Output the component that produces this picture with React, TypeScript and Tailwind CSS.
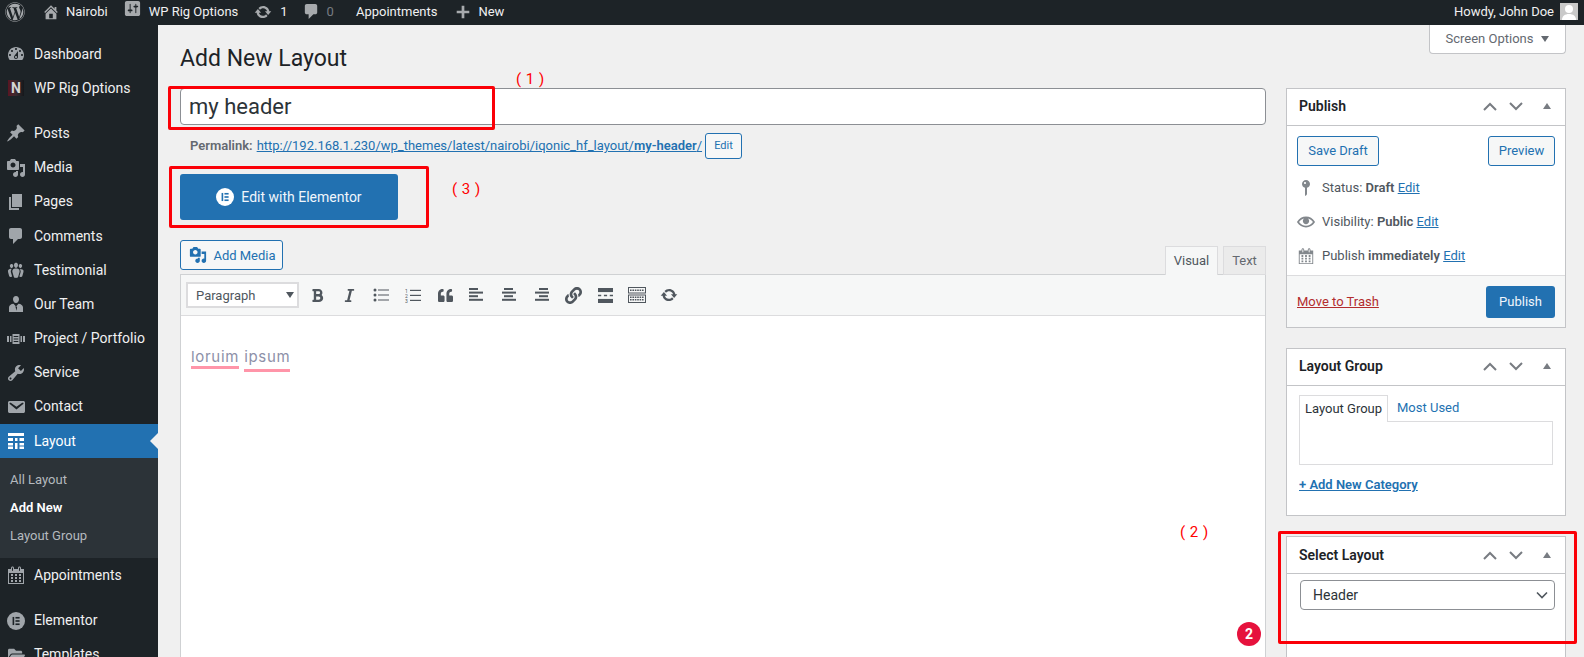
import React from "react";
import { FaWordpress, FaBold, FaItalic, FaQuoteLeft, FaLink, FaFolderOpen } from "react-icons/fa";

const P = {
  gauge: "M3.76 16h12.48c1.1-1.37 1.76-3.11 1.76-5 0-4.42-3.58-8-8-8s-8 3.58-8 8c0 1.89.66 3.63 1.76 5zM10 4c.55 0 1 .45 1 1s-.45 1-1 1-1-.45-1-1 .45-1 1-1zM6 6c.55 0 1 .45 1 1s-.45 1-1 1-1-.45-1-1 .45-1 1-1zm8 0c.55 0 1 .45 1 1s-.45 1-1 1-1-.45-1-1 .45-1 1-1zm-5.37 5.55L12 7v6c0 1.1-.9 2-2 2s-2-.9-2-2c0-.57.24-1.08.63-1.45zM4 10c.55 0 1 .45 1 1s-.45 1-1 1-1-.45-1-1 .45-1 1-1zm12 0c.55 0 1 .45 1 1s-.45 1-1 1-1-.45-1-1 .45-1 1-1zm-5 3c0-.55-.45-1-1-1s-1 .45-1 1 .45 1 1 1 1-.45 1-1z",
  pin: "M10.44 3.02l1.82-1.82 6.36 6.35-1.83 1.82c-1.05-.68-2.48-.57-3.41.36l-.75.75c-.92.93-1.04 2.35-.35 3.41l-1.83 1.82-2.41-2.41-2.8 2.79c-.42.42-3.38 2.71-3.8 2.29s1.86-3.39 2.28-3.81l2.79-2.79L4.1 9.36l1.83-1.82c1.05.69 2.48.57 3.4-.36l.75-.75c.93-.92 1.05-2.35.36-3.41z",
  media: "M13 11V4c0-.55-.45-1-1-1h-1.67L9 1H5L3.67 3H2c-.55 0-1 .45-1 1v7c0 .55.45 1 1 1h10c.55 0 1-.45 1-1zM7 4.5c1.38 0 2.5 1.12 2.5 2.5S8.38 9.5 7 9.5 4.5 8.38 4.5 7 5.62 4.5 7 4.5zM14 6h5v10.5c0 1.38-1.12 2.5-2.5 2.5S14 17.88 14 16.5s1.12-2.5 2.5-2.5c.17 0 .34.02.5.05V9h-3V6zm-4 8.05V13h2v3.5c0 1.38-1.12 2.5-2.5 2.5S7 17.88 7 16.5 8.12 14 9.5 14c.17 0 .34.02.5.05z",
  page: "M6 15V2h10v13H6zm-1 1h8v2H3V5h2v11z",
  comment: "M5 2h9c1.1 0 2 .9 2 2v7c0 1.1-.9 2-2 2h-2l-5 5v-5H5c-1.1 0-2-.9-2-2V4c0-1.1.9-2 2-2z",
  groups: "M8.03 4.46c-.29 1.28.55 3.46 1.97 3.46 1.41 0 2.25-2.18 1.96-3.46-.22-.98-1.08-1.63-1.96-1.63-.89 0-1.74.65-1.97 1.63zm-4.13.9c-.25 1.08.47 2.93 1.67 2.93s1.92-1.85 1.67-2.93c-.19-.83-.92-1.39-1.67-1.39s-1.48.56-1.67 1.39zm8.86 0c-.25 1.08.47 2.93 1.66 2.93 1.2 0 1.92-1.85 1.67-2.93-.19-.83-.92-1.39-1.67-1.39-.74 0-1.47.56-1.66 1.39zm-.59 11.43l1.25-4.3C14.2 10 12.71 8.47 10 8.47c-2.72 0-4.21 1.53-3.44 4.02l1.26 4.3C8.05 17.51 9 18 10 18c.98 0 1.94-.49 2.17-1.21zM5.5 9.2c-.6.8-1 2-.45 3.6l1.1 3.8c-.35.2-.75.3-1.15.3-.85 0-1.65-.4-1.85-1l-1.05-3.7C1.45 10.1 2.7 8.8 5 8.8zm9 0c2.3-.4 3.55.9 2.9 3l-1.05 3.7c-.2.6-1 1-1.85 1-.4 0-.8-.1-1.15-.3l1.1-3.8c.55-1.6.15-2.8-.95-3.6z",
  tools: "M16.68 9.77c-1.34 1.34-3.3 1.67-4.95.99l-5.41 6.52c-.99.99-2.59.99-3.58 0s-.99-2.59 0-3.57l6.52-5.42c-.68-1.65-.35-3.61.99-4.95 1.28-1.28 3.12-1.62 4.72-1.06l-2.89 2.89 2.82 2.82 2.86-2.87c.53 1.58.18 3.39-1.08 4.67zM3.81 16.21c.4.39 1.04.39 1.43 0 .4-.4.4-1.04 0-1.43-.39-.4-1.03-.4-1.43 0-.39.39-.39 1.03 0 1.43z",
  email: "M3.87 4h13.25C18.37 4 19 4.59 19 5.79v8.42c0 1.19-.63 1.79-1.88 1.79H3.87c-1.25 0-1.88-.6-1.88-1.79V5.79c0-1.2.63-1.79 1.88-1.79zm6.62 8.6l6.74-5.53c.24-.2.43-.66.13-1.07-.29-.41-.82-.42-1.17-.17l-5.7 3.86L4.8 5.83c-.35-.25-.88-.24-1.17.17-.3.41-.11.87.13 1.07z",
  calendar: "M15 4h3v15H2V4h3V3c0-.41.15-.76.44-1.06.29-.29.65-.44 1.06-.44s.77.15 1.06.44c.29.3.44.65.44 1.06v1h4V3c0-.41.15-.76.44-1.06.29-.29.65-.44 1.06-.44s.77.15 1.06.44c.29.3.44.65.44 1.06v1zM6 3v2.5c0 .14.05.26.15.36.09.09.21.14.35.14s.26-.05.35-.14c.1-.1.15-.22.15-.36V3c0-.14-.05-.26-.15-.35-.09-.1-.21-.15-.35-.15s-.26.05-.35.15c-.1.09-.15.21-.15.35zm7 0v2.5c0 .14.05.26.14.36.1.09.22.14.36.14s.26-.05.36-.14c.09-.1.14-.22.14-.36V3c0-.14-.05-.26-.14-.35-.1-.1-.22-.15-.36-.15s-.26.05-.36.15c-.09.09-.14.21-.14.35zm4 15V8H3v10h14zM7 9v2H5V9h2zm2 0h2v2H9V9zm4 2V9h2v2h-2zm-6 1v2H5v-2h2zm2 0h2v2H9v-2zm4 2v-2h2v2h-2zm-6 1v2H5v-2h2zm4 2H9v-2h2v2zm4 0h-2v-2h2v2z",
  home: "M16 8.5l1.53 1.53-1.06 1.06L10 4.62l-6.47 6.47-1.06-1.06L10 2.5l4 4v-2h2v4zm-6-2.46l6 5.99V18H4v-5.97zM12 17v-5H8v5h4z",
  update: "M10.2 3.28c3.53 0 6.43 2.61 6.92 6h2.08l-3.5 4-3.5-4h2.32c-.45-1.97-2.21-3.45-4.32-3.45-1.45 0-2.73.71-3.54 1.78L4.95 5.66C6.23 4.2 8.11 3.28 10.2 3.28zm-.4 13.44c-3.52 0-6.43-2.61-6.92-6H.8l3.5-4c1.17 1.33 2.33 2.67 3.5 4H5.48c.45 1.97 2.21 3.45 4.32 3.45 1.45 0 2.73-.71 3.54-1.78l1.71 1.95c-1.28 1.46-3.15 2.38-5.25 2.38z",
  plus: "M17 8.5v3h-5.5V17h-3v-5.5H3v-3h5.5V3h3v5.5H17z",
  settings: "M18 16V4c0-1.1-.9-2-2-2H4c-1.1 0-2 .9-2 2v12c0 1.1.9 2 2 2h12c1.1 0 2-.9 2-2zM8 11h1c.55 0 1 .45 1 1s-.45 1-1 1H8v1.5c0 .28-.22.5-.5.5s-.5-.22-.5-.5V13H6c-.55 0-1-.45-1-1s.45-1 1-1h1V5.5c0-.28.22-.5.5-.5s.5.22.5.5V11zm5-2h-1c-.55 0-1-.45-1-1s.45-1 1-1h1V5.5c0-.28.22-.5.5-.5s.5.22.5.5V7h1c.55 0 1 .45 1 1s-.45 1-1 1h-1v5.5c0 .28-.22.5-.5.5s-.5-.22-.5-.5V9z",
  status: "M14 6c0 1.86-1.28 3.41-3 3.86V16c0 1-2 2-2 2V9.86c-1.72-.45-3-2-3-3.86 0-2.21 1.79-4 4-4s4 1.79 4 4zM8 5c0 .55.45 1 1 1s1-.45 1-1-.45-1-1-1-1 .45-1 1z",
  eye: "M19.7 9.4C17.7 6 14 3.9 10 3.9S2.3 6 .3 9.4L0 10l.3.6c2 3.4 5.7 5.5 9.7 5.5s7.7-2.1 9.7-5.5l.3-.6-.3-.6zM10 14.1c-3.1 0-6-1.6-7.7-4.1C3.6 8 5.7 6.6 8 6.1c-.9.6-1.5 1.7-1.5 2.9 0 1.9 1.6 3.5 3.5 3.5s3.5-1.6 3.5-3.5c0-1.2-.6-2.3-1.5-2.9 2.3.5 4.4 1.9 5.7 3.9-1.7 2.5-4.6 4.1-7.7 4.1z",
  person: "M10 2c1.9 0 3 1.5 3 3.2S11.9 9 10 9 7 7 7 5.2 8.1 2 10 2zM3 18v-4.5C3 11.4 5 10 7.5 9.8L10 12.5l2.5-2.7C15 10 17 11.4 17 13.500V18zM9.3 12.500h1.400l.4 1-.7 3.200-.7-3.200z",
  project: "M1 7h2v6H1zM4 7h1.500v6H4zM17 7h2v6h-2zM14.500 7H16v6h-1.500zM6.500 5h7v10h-7zm1.200 2v1h4.600V7zm0 2.500v1h4.600v-1zm0 2.500v1h4.600v-1z",
  table: "M2 2h16v3H2zM2 7h5v3H2zM9 7h2.500v3H9zM13.500 7H18v3h-4.500zM2 12h5v2.500H2zM9 12h2.500v6H9zM13.500 12H18v2.500h-4.500zM2 15.500h5V18H2zM13.500 15.500H18V18h-4.500z",
};

const Ic = ({ d, size = 20, className = "" }: { d: string; size?: number; className?: string }) => (
  <svg viewBox="0 0 20 20" width={size} height={size} fill="currentColor" fillRule="evenodd" className={`shrink-0 ${className}`}>
    <path d={d} />
  </svg>
);

const ElementorIcon = ({ size, fg, bg }: { size: number; fg: string; bg: string }) => (
  <svg viewBox="0 0 20 20" width={size} height={size} className="shrink-0">
    <circle cx="10" cy="10" r="10" fill={fg} />
    <rect x="6.2" y="5.5" width="1.8" height="9" fill={bg} />
    <rect x="9.4" y="5.5" width="4.6" height="1.8" fill={bg} />
    <rect x="9.4" y="9.1" width="4.6" height="1.8" fill={bg} />
    <rect x="9.4" y="12.7" width="4.6" height="1.8" fill={bg} />
  </svg>
);

const MenuRow = ({ icon, label, sep }: { icon: React.ReactNode; label: string; sep?: boolean }) => (
  <div className={`flex h-[34.2px] shrink-0 items-center text-[14px] text-[#f0f0f1] ${sep ? "mb-[11px]" : ""}`}>
    <div className="flex w-[34px] justify-center pr-[2px] text-[#a0a5aa]">{icon}</div>
    <span>{label}</span>
  </div>
);

const Sidebar = () => (
  <aside className="flex w-[158px] shrink-0 flex-col overflow-hidden bg-[#1d2327] pt-[12px]">
    <MenuRow icon={<Ic d={P.gauge} />} label="Dashboard" />
    <MenuRow
      icon={
        <div className="flex h-[16px] w-[16px] items-center justify-center bg-gradient-to-r from-[#5a1422] via-[#3a2a30] to-[#15181b] text-[14px] font-bold leading-none text-[#d5d5d5]">
          N
        </div>
      }
      label="WP Rig Options"
      sep
    />
    <MenuRow icon={<Ic d={P.pin} />} label="Posts" />
    <MenuRow icon={<Ic d={P.media} />} label="Media" />
    <MenuRow icon={<Ic d={P.page} />} label="Pages" />
    <MenuRow icon={<Ic d={P.comment} />} label="Comments" />
    <MenuRow icon={<Ic d={P.groups} />} label="Testimonial" />
    <MenuRow icon={<Ic d={P.person} />} label="Our Team" />
    <MenuRow icon={<Ic d={P.project} />} label="Project / Portfolio" />
    <MenuRow icon={<Ic d={P.tools} />} label="Service" />
    <MenuRow icon={<Ic d={P.email} />} label="Contact" />
    <div className="relative flex h-[34.2px] shrink-0 items-center bg-[#2271b1] text-[14px] text-white">
      <div className="flex w-[34px] justify-center pr-[2px]">
        <Ic d={P.table} />
      </div>
      <span>Layout</span>
      <div className="absolute right-0 top-[9px] h-0 w-0 border-y-[8px] border-r-[8px] border-y-transparent border-r-[#f0f0f0]" />
    </div>
    <div className="h-[100px] shrink-0 bg-[#2c3338] pt-[7px] text-[13px] text-[#b4b9be]">
      <div className="flex h-[28px] items-center pl-[10px]">All Layout</div>
      <div className="flex h-[28px] items-center pl-[10px] font-semibold text-white">Add New</div>
      <div className="flex h-[28px] items-center pl-[10px]">Layout Group</div>
    </div>
    <MenuRow icon={<Ic d={P.calendar} />} label="Appointments" sep />
    <MenuRow icon={<ElementorIcon size={18} fg="#a0a5aa" bg="#1d2327" />} label="Elementor" />
    <MenuRow icon={<FaFolderOpen size={17} />} label="Templates" />
  </aside>
);

const AdminBar = () => (
  <header className="flex h-[25px] shrink-0 items-center bg-[#1d2327] pb-[2px] text-[13px] text-[#f0f0f1]">
    <FaWordpress size={20} className="ml-[5px] text-[#a7aaad]" />
    <Ic d={P.home} size={18} className="ml-[17px] text-[#a7aaad]" />
    <span className="ml-[6px]">Nairobi</span>
    <Ic d={P.settings} size={19} className="ml-[15px] -mt-[7px] text-[#a7aaad]" />
    <span className="ml-[7px]">WP Rig Options</span>
    <Ic d={P.update} size={18} className="ml-[16px] text-[#a7aaad]" />
    <span className="ml-[8px]">1</span>
    <Ic d={P.comment} size={19} className="ml-[14px] text-[#a7aaad]" />
    <span className="ml-[6px] text-[#787c82]">0</span>
    <span className="ml-[22px]">Appointments</span>
    <Ic d={P.plus} size={18} className="ml-[17px] text-[#a7aaad]" />
    <span className="ml-[6px]">New</span>
    <span className="ml-auto">Howdy, John Doe</span>
    <div className="ml-[6px] mr-[6px] flex h-[17px] w-[18px] items-end justify-center overflow-hidden bg-[#c9c9c9]">
      <svg viewBox="0 0 18 17" width="18" height="17" fill="#fff">
        <circle cx="9" cy="6" r="4" />
        <path d="M2 17c0-4 3-6 7-6s7 2 7 6z" />
      </svg>
    </div>
  </header>
);

const MetaControls = () => (
  <div className="flex items-center text-[#787c82]">
    <svg viewBox="0 0 14 9" width="14" height="9" fill="none" stroke="currentColor" strokeWidth="2">
      <path d="M1 8l6-6 6 6" />
    </svg>
    <svg viewBox="0 0 14 9" width="14" height="9" fill="none" stroke="currentColor" strokeWidth="2" className="ml-[12px]">
      <path d="M1 1l6 6 6-6" />
    </svg>
    <div className="ml-[20px] h-0 w-0 border-x-[4px] border-b-[6px] border-x-transparent border-b-[#787c82]" />
  </div>
);

const BoxHead = ({ title, lifted = true }: { title: string; lifted?: boolean }) => (
  <div className={`flex h-[37px] items-center justify-between border-b border-[#c3c4c7] pl-[12px] pr-[14px] ${lifted ? "pb-[2px]" : ""}`}>
    <span className="text-[14px] font-semibold text-[#1d2327]">{title}</span>
    <MetaControls />
  </div>
);

const OutlineBtn = ({ children, className = "" }: { children: React.ReactNode; className?: string }) => (
  <div className={`flex items-center justify-center rounded-[3px] border border-[#2271b1] bg-[#f6f7f7] text-[#2271b1] ${className}`}>
    {children}
  </div>
);

const A = ({ children }: { children: React.ReactNode }) => <span className="text-[#2271b1] underline">{children}</span>;

const MiscRow = ({ icon, children }: { icon: React.ReactNode; children: React.ReactNode }) => (
  <div className="flex h-[34px] items-center pl-[10px] text-[13px] text-[#50575e]">
    <div className="flex w-[18px] justify-center text-[#82878c]">{icon}</div>
    <span className="ml-[7px]">{children}</span>
  </div>
);

const PublishBox = () => (
  <section className="h-[240px] border border-[#c3c4c7] bg-white">
    <BoxHead title="Publish" />
    <div className="flex justify-between px-[10px] pt-[10px]">
      <OutlineBtn className="h-[30px] w-[82px] text-[13px]">Save Draft</OutlineBtn>
      <OutlineBtn className="h-[30px] w-[67px] text-[13px]">Preview</OutlineBtn>
    </div>
    <div className="mt-[5px]">
      <MiscRow icon={<Ic d={P.status} />}>
        Status: <b className="font-semibold">Draft</b> <A>Edit</A>
      </MiscRow>
      <MiscRow icon={<Ic d={P.eye} size={18} />}>
        Visibility: <b className="font-semibold">Public</b> <A>Edit</A>
      </MiscRow>
      <MiscRow icon={<Ic d={P.calendar} size={18} />}>
        Publish <b className="font-semibold">immediately</b> <A>Edit</A>
      </MiscRow>
    </div>
    <div className="mt-[2px] flex h-[52px] items-center justify-between border-t border-[#dcdcde] bg-[#f6f7f7] px-[10px]">
      <span className="text-[13px] text-[#b32d2e] underline">Move to Trash</span>
      <div className="flex h-[32px] w-[69px] items-center justify-center rounded-[3px] bg-[#2271b1] text-[13px] text-[#f0f6fc]">Publish</div>
    </div>
  </section>
);

const LayoutGroupBox = () => (
  <section className="mt-[20px] h-[168px] border border-[#c3c4c7] bg-white">
    <BoxHead title="Layout Group" />
    <div className="px-[12px] pt-[9px]">
      <div className="flex h-[27px] text-[13px]">
        <div className="relative z-10 flex h-[27px] w-[89px] items-center justify-center border border-b-0 border-[#dcdcde] bg-white pb-[1px] text-[#2c3338]">Layout Group</div>
        <div className="flex h-[27px] items-center pb-[1px] pl-[9px] text-[#2271b1]">Most Used</div>
      </div>
      <div className="-mt-px h-[44px] border border-[#dcdcde] bg-white" />
      <div className="mt-[10px] text-[13px] font-semibold text-[#2271b1] underline">+ Add New Category</div>
    </div>
  </section>
);

const SelectBox = () => (
  <section className="mt-[20px] h-[140px] border border-[#c3c4c7] bg-white">
    <BoxHead title="Select Layout" lifted={false} />
    <div className="pl-[13px] pr-[10px] pt-[6px]">
      <div className="flex h-[30px] items-center justify-between rounded-[4px] border border-[#8c8f94] pl-[12px] pr-[6px] text-[14px] text-[#2c3338]">
        <span>Header</span>
        <svg viewBox="0 0 12 8" width="12" height="8" fill="none" stroke="#50575e" strokeWidth="1.6">
          <path d="M1 1.500l5 5 5-5" />
        </svg>
      </div>
    </div>
  </section>
);

const TB = ({ children }: { children: React.ReactNode }) => (
  <div className="flex h-[26px] w-[32px] items-center justify-center text-[#50575e]">{children}</div>
);

const Lines = ({ rows }: { rows: [number, number][] }) => (
  <svg viewBox="0 0 16 14" width="16" height="14" fill="currentColor">
    {rows.map(([x, w], i) => (
      <rect key={i} x={x} y={i * 3.6} width={w} height="2" />
    ))}
  </svg>
);

const Toolbar = () => (
  <div className="flex h-[41px] items-center border-b border-[#dcdcde] bg-[#f6f7f7] pl-[5px]">
    <div className="flex h-[26px] w-[113px] items-center justify-between border-2 border-[#dcdcde] bg-white pl-[8px] pr-[3px] text-[13px] text-[#50575e]">
      <span className="pt-[1px]">Paragraph</span>
      <div className="h-0 w-0 border-x-[4px] border-t-[6px] border-x-transparent border-t-[#50575e]" />
    </div>
    <div className="ml-[2px] flex">
      <TB><FaBold size={15} /></TB>
      <TB><FaItalic size={15} /></TB>
      <TB>
        <svg viewBox="0 0 16 14" width="16" height="14" fill="currentColor">
          <circle cx="2" cy="2" r="1.500" /><rect x="5" y="1.500" width="11" height="1" />
          <circle cx="2" cy="7" r="1.500" /><rect x="5" y="6.500" width="11" height="1" />
          <circle cx="2" cy="12" r="1.500" /><rect x="5" y="11.500" width="11" height="1" />
        </svg>
      </TB>
      <TB>
        <svg viewBox="0 0 16 15" width="16" height="15" fill="currentColor">
          <text x="0" y="4.500" fontSize="5" fontFamily="Roboto">1</text><rect x="5" y="1.800" width="11" height="1.200" />
          <text x="0" y="9.500" fontSize="5" fontFamily="Roboto">2</text><rect x="5" y="6.800" width="11" height="1.200" />
          <text x="0" y="14.500" fontSize="5" fontFamily="Roboto">3</text><rect x="5" y="11.800" width="11" height="1.200" />
        </svg>
      </TB>
      <TB><FaQuoteLeft size={15} /></TB>
      <TB><Lines rows={[[0, 9], [0, 14], [0, 9], [0, 14]]} /></TB>
      <TB><Lines rows={[[3, 9], [1, 14], [3, 9], [1, 14]]} /></TB>
      <TB><Lines rows={[[6, 9], [2, 14], [6, 9], [2, 14]]} /></TB>
      <TB><FaLink size={17} /></TB>
      <TB>
        <svg viewBox="0 0 14 14" width="15" height="15" fill="currentColor">
          <rect x="0" y="0" width="14" height="3.800" />
          <rect x="0" y="6.300" width="3" height="1.400" /><rect x="5.500" y="6.300" width="3" height="1.400" /><rect x="11" y="6.300" width="3" height="1.400" />
          <rect x="0" y="10.200" width="14" height="3.800" />
        </svg>
      </TB>
      <TB>
        <svg viewBox="0 0 18 16" width="18" height="16" fill="none" stroke="currentColor" strokeWidth="1">
          <rect x="0.500" y="0.500" width="17" height="5.500" />
          <rect x="0.500" y="8" width="17" height="7.500" />
          <path d="M2 3.200h14M2 10.200h14M2 12.800h14" strokeDasharray="1.600 0.800" strokeWidth="1.400" />
        </svg>
      </TB>
      <TB><Ic d={P.update} size={18} /></TB>
    </div>
  </div>
);

const RedBox = ({ className }: { className: string }) => (
  <div className={`pointer-events-none absolute rounded-[2px] border-[3px] border-[#fb0007] ${className}`} />
);

const Note = ({ className, children }: { className: string; children: React.ReactNode }) => (
  <div className={`absolute text-[15px] leading-none tracking-[0.5px] text-[#f00] ${className}`}>{children}</div>
);

export default function App() {
  return (
    <div className="relative flex h-[657px] w-[1584px] flex-col overflow-hidden bg-[#f0f0f0] font-[Roboto,sans-serif] text-[13px] text-[#3c434a]">
      <AdminBar />
      <div className="flex min-h-0 flex-1">
        <Sidebar />
        <main className="min-w-0 flex-1 pl-[22px] pr-[18px]">
          <div className="flex h-[63px] items-start justify-between">
            <h1 className="mt-[20px] text-[23px] font-normal leading-[28px] text-[#1d2327]">Add New Layout</h1>
            <div className="flex h-[29px] w-[137px] items-center justify-center gap-[8px] rounded-b-[4px] border border-t-0 border-[#c3c4c7] bg-white text-[13px] text-[#646970]">
              <span>Screen Options</span>
              <div className="h-0 w-0 border-x-[4px] border-t-[6px] border-x-transparent border-t-[#646970]" />
            </div>
          </div>
          <div className="flex gap-[20px]">
            <div className="flex h-[600px] w-[1086px] shrink-0 flex-col">
              <div className="flex h-[37px] shrink-0 items-center rounded-[4px] border border-[#8c8f94] bg-white pl-[8px] text-[22px] text-[#2c3338]">my header</div>
              <div className="mt-[8px] flex h-[26px] shrink-0 items-center pl-[10px] text-[13px]">
                <b className="font-semibold text-[#646970]">Permalink:</b>
                <span className="ml-[4px] text-[#2271b1] underline">
                  http://192.168.1.230/wp_themes/latest/nairobi/iqonic_hf_layout/<b className="font-semibold">my-header</b>/
                </span>
                <OutlineBtn className="ml-[3px] h-[26px] w-[37px] text-[11px]">Edit</OutlineBtn>
              </div>
              <div className="mt-[15px] flex h-[46px] w-[218px] shrink-0 items-center justify-center gap-[7px] rounded-[3px] bg-[#2271b1] text-[14px] text-[#f0f6fc]">
                <ElementorIcon size={18} fg="#ffffff" bg="#2271b1" />
                <span>Edit with Elementor</span>
              </div>
              <div className="mt-[20px] flex h-[34px] shrink-0 items-start justify-between">
                <OutlineBtn className="h-[30px] w-[103px] gap-[6px] pl-[2px] text-[13px]">
                  <Ic d={P.media} size={18} />
                  <span className="pt-[1px]">Add Media</span>
                </OutlineBtn>
                <div className="relative z-10 mt-[6px] flex h-[29px] gap-[5px] text-[13px]">
                  <div className="flex h-[29px] w-[53px] items-center justify-center border border-b-0 border-[#dcdcde] bg-[#f6f7f7] text-[#50575e]">Visual</div>
                  <div className="flex h-[29px] w-[43px] items-center justify-center border border-[#dcdcde] bg-[#ebebeb] text-[#646970]">Text</div>
                </div>
              </div>
              <div className="flex flex-1 flex-col border border-[#cfd1d3] bg-white">
                <Toolbar />
                <div className="flex-1 pl-[10px] pt-[31px] font-[Inter,sans-serif] text-[15px] leading-[20px] tracking-[0.7px] text-[#8d90a8]">
                  <span className="border-b-[3px] border-[#ff95a9]">loruim</span>
                  <span className="ml-[5px] inline-block border-b-[3px] border-[#ff95a9] pb-[2px]">ipsum</span>
                </div>
              </div>
            </div>
            <div className="w-[280px] shrink-0">
              <PublishBox />
              <LayoutGroupBox />
              <SelectBox />
            </div>
          </div>
        </main>
      </div>

      <RedBox className="left-[168px] top-[86px] h-[44px] w-[327px]" />
      <RedBox className="left-[169px] top-[166px] h-[62px] w-[260px]" />
      <RedBox className="left-[1278px] top-[531px] h-[113px] w-[299px]" />
      <Note className="left-[516px] top-[72px]">( 1 )</Note>
      <Note className="left-[452px] top-[182px]">( 3 )</Note>
      <Note className="left-[1180px] top-[525px]">( 2 )</Note>
      <div className="absolute left-[1237px] top-[622px] flex h-[24px] w-[24px] items-center justify-center rounded-full bg-[#e6123d] text-[14px] font-bold text-white">2</div>
    </div>
  );
}
